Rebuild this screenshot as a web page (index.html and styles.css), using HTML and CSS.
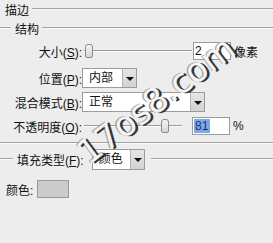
FILE: index.html
```html
<!DOCTYPE html>
<html lang="zh-CN">
<head>
    <meta charset="UTF-8">
    <title>描边</title>
    <link rel="stylesheet" href="styles.css">
</head>
<body>
    <div class="panel">
        <div class="legend legend-top"><span class="legend-text">描边</span></div>
        <div class="legend legend-sub"><span class="legend-text">结构</span></div>

        <div class="row row-size">
            <span class="lbl">大小(<u>S</u>):</span>
            <div class="slider slider-size"><span class="thumb"></span></div>
            <div class="field">2</div>
            <span class="unit">像素</span>
        </div>

        <div class="row row-pos">
            <span class="lbl">位置(<u>P</u>):</span>
            <div class="select select-pos">
                <span class="select-value">内部</span>
                <span class="select-btn"></span>
            </div>
        </div>

        <div class="row row-blend">
            <span class="lbl">混合模式(<u>B</u>):</span>
            <div class="select select-blend">
                <span class="select-value">正常</span>
                <span class="select-btn"></span>
            </div>
        </div>

        <div class="row row-opacity">
            <span class="lbl">不透明度(<u>O</u>):</span>
            <div class="slider slider-opacity"><span class="thumb"></span></div>
            <div class="field field-opacity"><span class="selected">81</span></div>
            <span class="unit">%</span>
        </div>

        <div class="divider"></div>

        <div class="legend legend-fill">
            <span class="legend-text">填充类型(<u>F</u>):</span>
            <div class="select select-fill">
                <span class="select-value">颜色</span>
                <span class="select-btn"></span>
            </div>
        </div>

        <div class="row row-color">
            <span class="color-lbl">颜色:</span>
            <span class="swatch"></span>
        </div>
    </div>

    <!-- watermark over the screenshot -->
    <span class="watermark">17os8.com</span>
</body>
</html>
```

FILE: styles.css
```css
body {
    margin: 0;
    width: 273px;
    height: 243px;
    overflow: hidden;
    position: relative;
    background: #ededed;
    font-family: "Liberation Sans", "Noto Sans CJK SC", sans-serif;
    font-size: 12px;
    color: #111;
}

u {
    text-decoration: underline;
}

.panel {
    display: flex;
    flex-direction: column;
}

/* Group headers with etched lines */
.legend {
    display: flex;
    align-items: center;
}

.legend::after {
    content: "";
    flex: 1;
    border-top: 1px solid #a2a2a2;
    border-bottom: 1px solid #fafafa;
    margin-left: 3px;
}

.legend-top {
    height: 18px;
    padding-left: 5px;
}

.legend-sub {
    height: 20px;
}

.legend-sub::before,
.legend-fill::before {
    content: "";
    width: 11px;
    border-top: 1px solid #a2a2a2;
    border-bottom: 1px solid #fafafa;
    margin-right: 4px;
}

/* Rows */
.row {
    display: flex;
    align-items: center;
}

.lbl {
    width: 82px;
    text-align: right;
    flex-shrink: 0;
    white-space: nowrap;
}

.row-size {
    height: 20px;
    margin-top: 3px;
}

.row-pos {
    height: 22px;
    margin-top: 6px;
}

.row-blend {
    height: 22px;
    margin-top: 2px;
}

.row-opacity {
    height: 20px;
    margin-top: 3px;
}

/* Sliders */
.slider {
    position: relative;
    height: 14px;
    margin-left: 2px;
}

.slider::before {
    content: "";
    position: absolute;
    left: 0;
    right: 0;
    top: 6px;
    border-top: 1px solid #9a9a9a;
    border-bottom: 1px solid #fff;
}

.thumb {
    position: absolute;
    top: 0;
    width: 6px;
    height: 12px;
    border: 1px solid #8c8c8c;
    border-radius: 3px 3px 2px 2px;
    background: linear-gradient(#f4f4f4, #d6d6d6);
}

.slider-size {
    width: 108px;
}

.slider-size .thumb {
    left: 1px;
}

.slider-opacity {
    width: 98px;
    margin-right: 10px;
}

.slider-opacity .thumb {
    left: 77px;
}

/* Text fields */
.field {
    width: 35px;
    height: 16px;
    margin-left: 1px;
    border: 1px solid #9c9c9c;
    background: #fff;
    line-height: 16px;
    padding-left: 1px;
    box-sizing: content-box;
}

.field-opacity {
    height: 16px;
    margin-left: 0;
}

.selected {
    background: #7ea9e6;
    color: #17347a;
    padding: 0 2px 0 1px;
}

.unit {
    margin-left: 3px;
}

/* Dropdowns */
.select {
    display: flex;
    height: 20px;
    border: 1px solid #9c9c9c;
    background: #fff;
    box-sizing: border-box;
}

.select-value {
    flex: 1;
    padding-left: 6px;
    line-height: 18px;
}

.select-btn {
    width: 13px;
    border-left: 1px solid #b4b4b4;
    background: linear-gradient(#e6e6e6, #d2d2d2);
    position: relative;
}

.select-btn::after {
    content: "";
    position: absolute;
    left: 3px;
    top: 8px;
    border-left: 4px solid transparent;
    border-right: 4px solid transparent;
    border-top: 4px solid #111;
}

.select-pos {
    width: 55px;
    margin-left: 0;
}

.select-blend {
    width: 123px;
}

.select-fill {
    width: 53px;
    height: 21px;
    margin-left: 8px;
}

/* Separator between sections */
.divider {
    margin-top: 6px;
    border-top: 1px solid #a2a2a2;
    border-bottom: 1px solid #fafafa;
}

.legend-fill {
    height: 22px;
    margin-top: 4px;
}

.legend-fill::before {
    width: 13px;
}

.legend-fill::after {
    margin-left: 6px;
}

.row-color {
    height: 18px;
    margin-top: 10px;
    padding-left: 6px;
}

.color-lbl {
    width: 31px;
}

.swatch {
    width: 30px;
    height: 16px;
    border: 1px solid #9a9a9a;
    background: #cbcbcb;
}

/* Watermark */
.watermark {
    position: absolute;
    left: 156px;
    top: 100px;
    transform: translate(-50%, -50%) rotate(-37deg);
    font-family: "DejaVu Sans", sans-serif;
    font-size: 34px;
    white-space: nowrap;
    color: #f6f6f6;
    text-shadow: 2px 2px 0 #222, -1px -1px 0 #999;
    opacity: 0.9;
}
```
